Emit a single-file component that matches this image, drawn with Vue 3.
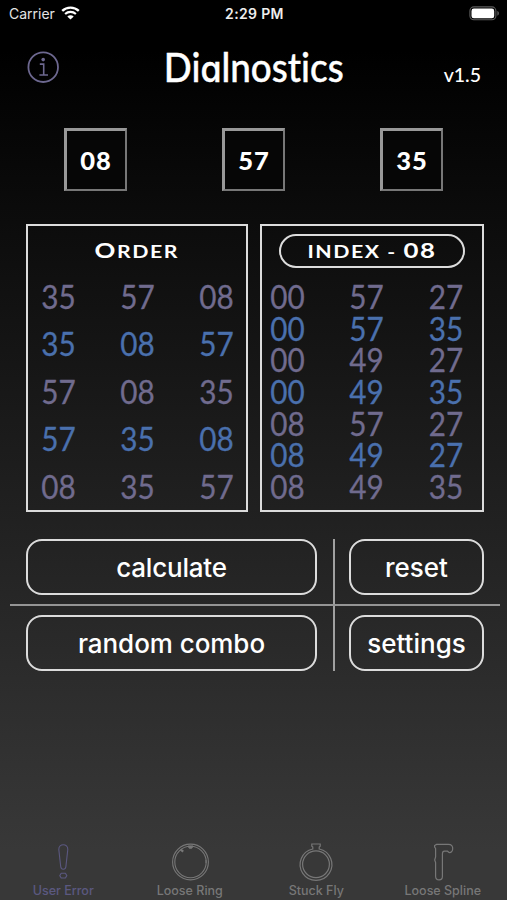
<script setup>
const dials = ['08', '57', '35']
const order = [
  ['35', '57', '08'],
  ['35', '08', '57'],
  ['57', '08', '35'],
  ['57', '35', '08'],
  ['08', '35', '57'],
]
const index = [
  ['00', '57', '27'],
  ['00', '57', '35'],
  ['00', '49', '27'],
  ['00', '49', '35'],
  ['08', '57', '27'],
  ['08', '49', '27'],
  ['08', '49', '35'],
]
</script>

<template>
  <main class="screen">
    <div class="status">
      <div class="carrier">
        <span>Carrier</span>
        <svg width="19" height="14" viewBox="0 0 19 14" fill="none">
          <path d="M1.2 4.9C5.8.5 13.2.5 17.8 4.9" stroke="#fff" stroke-width="2.4" />
          <path d="M4.1 8C7.2 5.2 11.8 5.2 14.9 8" stroke="#fff" stroke-width="2.2" />
          <path d="M6.3 10.4C8.1 8.8 10.9 8.8 12.7 10.4L9.5 13.6Z" fill="#fff" />
        </svg>
      </div>
      <span class="time">2:29 PM</span>
      <svg class="battery" width="31" height="15" viewBox="0 0 31 15">
        <rect x=".9" y=".9" width="26" height="12.9" rx="4" fill="none" stroke="#5c5c5c" stroke-width="1.1" />
        <rect x="2.5" y="2.6" width="22.7" height="9.6" rx="2.3" fill="#fff" />
        <path d="M28.3 5.1C30.5 5.8 30.5 9 28.3 9.7Z" fill="#5c5c5c" />
      </svg>
    </div>

    <header class="header">
      <svg class="info" width="32" height="32" viewBox="0 0 32 32" fill="none" stroke="#6d6890">
        <circle cx="16.2" cy="16.2" r="14.8" stroke-width="1.8" />
        <path d="M12.8 13.1H16.7V24M12.4 24H21" stroke-width="1.6" />
        <circle cx="16.2" cy="8.6" r="1.8" fill="#6d6890" stroke="none" />
      </svg>
      <h1><span class="wordmark">Di<span class="round">a</span>lnostics</span></h1>
      <span class="version">v1.5</span>
    </header>

    <section class="dials">
      <div v-for="d in dials" :key="d" class="dial">{{ d }}</div>
    </section>

    <section class="panels">
      <div class="panel order">
        <div class="caption"><span class="engraved"><span class="big">O</span>RDER</span></div>
        <div class="rows">
          <div v-for="(row, r) in order" :key="r" class="row">
            <span v-for="(n, c) in row" :key="c" class="num">{{ n }}</span>
          </div>
        </div>
      </div>
      <div class="panel index">
        <div class="caption pill"><span class="engraved">INDEX - <span class="big">08</span></span></div>
        <div class="rows">
          <div v-for="(row, r) in index" :key="r" class="row">
            <span v-for="(n, c) in row" :key="c" class="num">{{ n }}</span>
          </div>
        </div>
      </div>
    </section>

    <section class="actions">
      <button class="calculate">calculate</button>
      <i class="vline"></i>
      <button class="reset">reset</button>
      <i class="hline"></i>
      <button class="random">random combo</button>
      <button class="settings">settings</button>
    </section>

    <nav class="tabs">
      <div class="tab active">
        <svg width="40" height="40" viewBox="0 0 40 40" fill="none" stroke="currentColor" stroke-width="1.1">
          <path d="M15.8 7.5C15.6 1.2 25 1.2 24.8 7.5L22.9 24.5C22.5 28.2 18.1 28.2 17.7 24.5Z" />
          <path d="M18.2 31.2H22.4L23.8 33.6L22.4 36H18.2L16.8 33.6Z" stroke-linejoin="round" />
        </svg>
        <span>User Error</span>
      </div>
      <div class="tab">
        <svg width="40" height="40" viewBox="0 0 40 40" fill="none" stroke="currentColor">
          <circle cx="20.5" cy="20" r="17.9" stroke-width="1.1" />
          <circle cx="20.5" cy="20" r="15.7" stroke-width="1.1" />
          <path d="M18.2 4H23L21.8 6.2H19.2Z" fill="currentColor" />
          <path d="M10.5 7.4L13.2 9.6" stroke-width="2.2" />
          <path d="M36 18V21" />
        </svg>
        <span>Loose Ring</span>
      </div>
      <div class="tab">
        <svg width="40" height="40" viewBox="0 0 40 40" fill="none" stroke="currentColor">
          <path d="M16.8 7V5L15.8 4.2V2H24.2V4.2L23.2 5V7A15.9 15.9 0 1 1 16.8 7Z" stroke-width="1.2" />
          <circle cx="20" cy="22.3" r="13.4" stroke-width="1.2" />
        </svg>
        <span>Stuck Fly</span>
      </div>
      <div class="tab">
        <svg width="40" height="40" viewBox="0 0 40 40" fill="none" stroke="currentColor" stroke-width="1.2">
          <path d="M13.5 2.4H25.5C28.5 2.4 29.9 4 29.7 7C29.5 9.5 28 10.8 26 10.5L24.5 9.2H21.5C20 9.2 19.4 10 19.4 12V34.5C19.4 39 12.8 39 12.6 34.5V20.5L11.7 18L12.6 15V6.5L11.6 5V3.6Z" />
        </svg>
        <span>Loose Spline</span>
      </div>
    </nav>
  </main>
</template>

<style>
body {
  background: #000;
}
</style>

<style scoped>
.screen {
  width: 507px;
  height: 900px;
  box-sizing: border-box;
  overflow: hidden;
  display: flex;
  flex-direction: column;
  color: #fff;
  background: linear-gradient(#000 0, #000 50px, #383838 850px, #383838 100%);
  font-family: Inter, sans-serif;
}
.status {
  height: 28px;
  display: grid;
  grid-template-columns: 1fr auto 1fr;
  align-items: center;
  padding: 0 7px 0 9px;
  box-sizing: border-box;
  font-size: 14px;
  line-height: 28px;
}
.carrier {
  display: flex;
  align-items: center;
  gap: 6px;
  color: #e4e4e4;
}
.carrier svg {
  margin-top: -2px;
}
.time {
  font-weight: 600;
  font-size: 14px;
  letter-spacing: 0.35px;
  color: #eee;
}
.battery {
  justify-self: end;
  margin-top: -2px;
}
.header {
  height: 100px;
  display: grid;
  grid-template-columns: 60px 1fr 60px;
  padding: 0 26px 0 27px;
}
.info {
  margin-top: 23px;
}
h1 {
  margin: 0;
  padding-top: 15px;
  text-align: center;
  font: 500 40px/48px Lato, sans-serif;
  font-variant-ligatures: none;
  -webkit-text-stroke: 0.4px #fff;
  white-space: nowrap;
}
.wordmark {
  display: inline-block;
  transform: scaleX(0.92);
}
.round {
  font-family: Inter, sans-serif;
  font-feature-settings: 'cv11';
  font-size: 37px;
  line-height: 1;
}
.version {
  font: 500 19.5px/24px Lato, sans-serif;
  text-align: right;
  padding-top: 35px;
}
.dials {
  display: flex;
  justify-content: space-between;
  height: 63px;
  padding: 0 64px;
}
.dial {
  width: 63px;
  height: 63px;
  box-sizing: border-box;
  border: 2px solid #777;
  border-top: 3px solid #989898;
  border-left: 3px solid #989898;
  background: #060606;
  text-align: center;
  font: 900 25.5px/58px Lato, sans-serif;
  letter-spacing: 1px;
}
.panels {
  display: flex;
  justify-content: space-between;
  height: 288px;
  margin: 33px 23px 0 26px;
}
.panel {
  box-sizing: border-box;
  border: 2px solid #dcdcdc;
  width: 222px;
  display: flex;
  flex-direction: column;
}
.index {
  width: 224px;
}
.caption {
  height: 34px;
  margin: 8px 17px 0;
  display: flex;
  align-items: center;
  justify-content: center;
  box-sizing: border-box;
}
.pill {
  border: 2px solid #dcdcdc;
  border-radius: 17px;
}
.engraved {
  font: 700 16.5px/24px Lato, sans-serif;
  letter-spacing: 1.2px;
  transform: scaleX(1.29);
  white-space: nowrap;
}
.big {
  font-size: 20px;
}
.rows {
  display: flex;
  flex-direction: column;
}
.row {
  display: grid;
  grid-template-columns: repeat(3, 79px);
  justify-content: center;
  height: 47.5px;
  align-items: center;
  color: #706b8e;
}
.order .rows {
  margin-top: 5.5px;
}
.index .rows {
  margin: 13px 11px 0 0;
}
.index .row {
  height: 31.6px;
  grid-template-columns: 79px 79px 80px;
}
.row:nth-child(even) {
  color: #4a70ad;
}
.num {
  text-align: center;
  font: 400 33px/31px Lato, sans-serif;
  -webkit-text-stroke: 0.3px currentColor;
  transform: scaleX(0.9);
}
.actions {
  display: grid;
  grid-template-columns: 291px 2px 135px;
  grid-template-rows: 56px 20px 56px;
  column-gap: 15px;
  margin: 27px 0 0 26px;
}
button {
  background: transparent;
  border: 2px solid #dcdcdc;
  border-radius: 16px;
  color: #fff;
  font: 500 26px/50px Inter, sans-serif;
  padding: 2px 0 0;
  white-space: nowrap;
}
.calculate {
  grid-area: 1 / 1;
  letter-spacing: -0.2px;
}
.reset {
  grid-area: 1 / 3;
}
.random {
  grid-area: 3 / 1;
  letter-spacing: -0.05px;
}
.settings {
  grid-area: 3 / 3;
}
.vline {
  grid-area: 1 / 2 / 4 / 3;
  margin: 0 -1px 0 1px;
  background: #a0a0a0;
}
.hline {
  grid-area: 2 / 1 / 3 / 4;
  height: 2px;
  margin: 9px -16px 0;
  background: #959595;
}
.tabs {
  margin-top: auto;
  height: 58px;
  display: grid;
  grid-template-columns: repeat(4, 126.5px);
}
.tab {
  display: flex;
  flex-direction: column;
  align-items: center;
  color: #777;
  font: 500 12.5px/18px Inter, sans-serif;
}
.active {
  color: #5b5880;
}
</style>
